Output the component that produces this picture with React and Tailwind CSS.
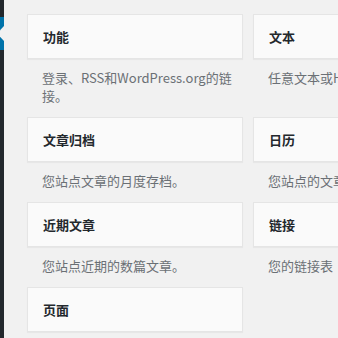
const widgets = [
  ["功能", "登录、RSS和WordPress.org的链接。"],
  ["文本", "任意文本或HTML。"],
  ["文章归档", "您站点文章的月度存档。"],
  ["日历", "您站点的文章日历。"],
  ["近期文章", "您站点近期的数篇文章。"],
  ["链接", "您的链接表"],
  ["页面", null],
];

export default function App() {
  return (
    <div
      className="w-[338px] h-[338px] overflow-hidden flex bg-[#f1f1f1]"
      style={{ fontFamily: '"Noto Sans CJK SC", "Noto Sans", sans-serif' }}
    >
      <div className="relative w-[4px] shrink-0 bg-[#23282d]">
        <div className="absolute left-0 top-[17px] w-[4px] h-[33px] bg-[#0073aa]" />
        <svg className="absolute left-0 top-0" width="4" height="60" viewBox="0 0 4 60">
          <polygon points="4,26 -3,33.5 4,41" fill="#f1f1f1" />
        </svg>
      </div>
      <div className="flex-1 pl-[23px] pt-[14px]">
        <div className="grid grid-cols-[216px_216px] gap-x-[10px]">
          {widgets.map(([title, desc], i) => (
            <div key={i} className="flex flex-col">
              <div className="h-[45px] flex items-center px-[15px] bg-[#fafafa] border border-[#e5e5e5] shadow-[0_1px_1px_rgba(0,0,0,0.04)]">
                <span className="text-[13px] font-bold text-[#23282d] leading-none">{title}</span>
              </div>
              {desc && (
                <div className="pt-[10px] pb-[12px] pl-[15px] pr-[10px] text-[13px] leading-[18px] text-[#6b7075] [line-break:anywhere]">
                  {i % 2 === 1 ? <span className="whitespace-nowrap">{desc}</span> : desc}
                </div>
              )}
            </div>
          ))}
        </div>
      </div>
    </div>
  );
}
